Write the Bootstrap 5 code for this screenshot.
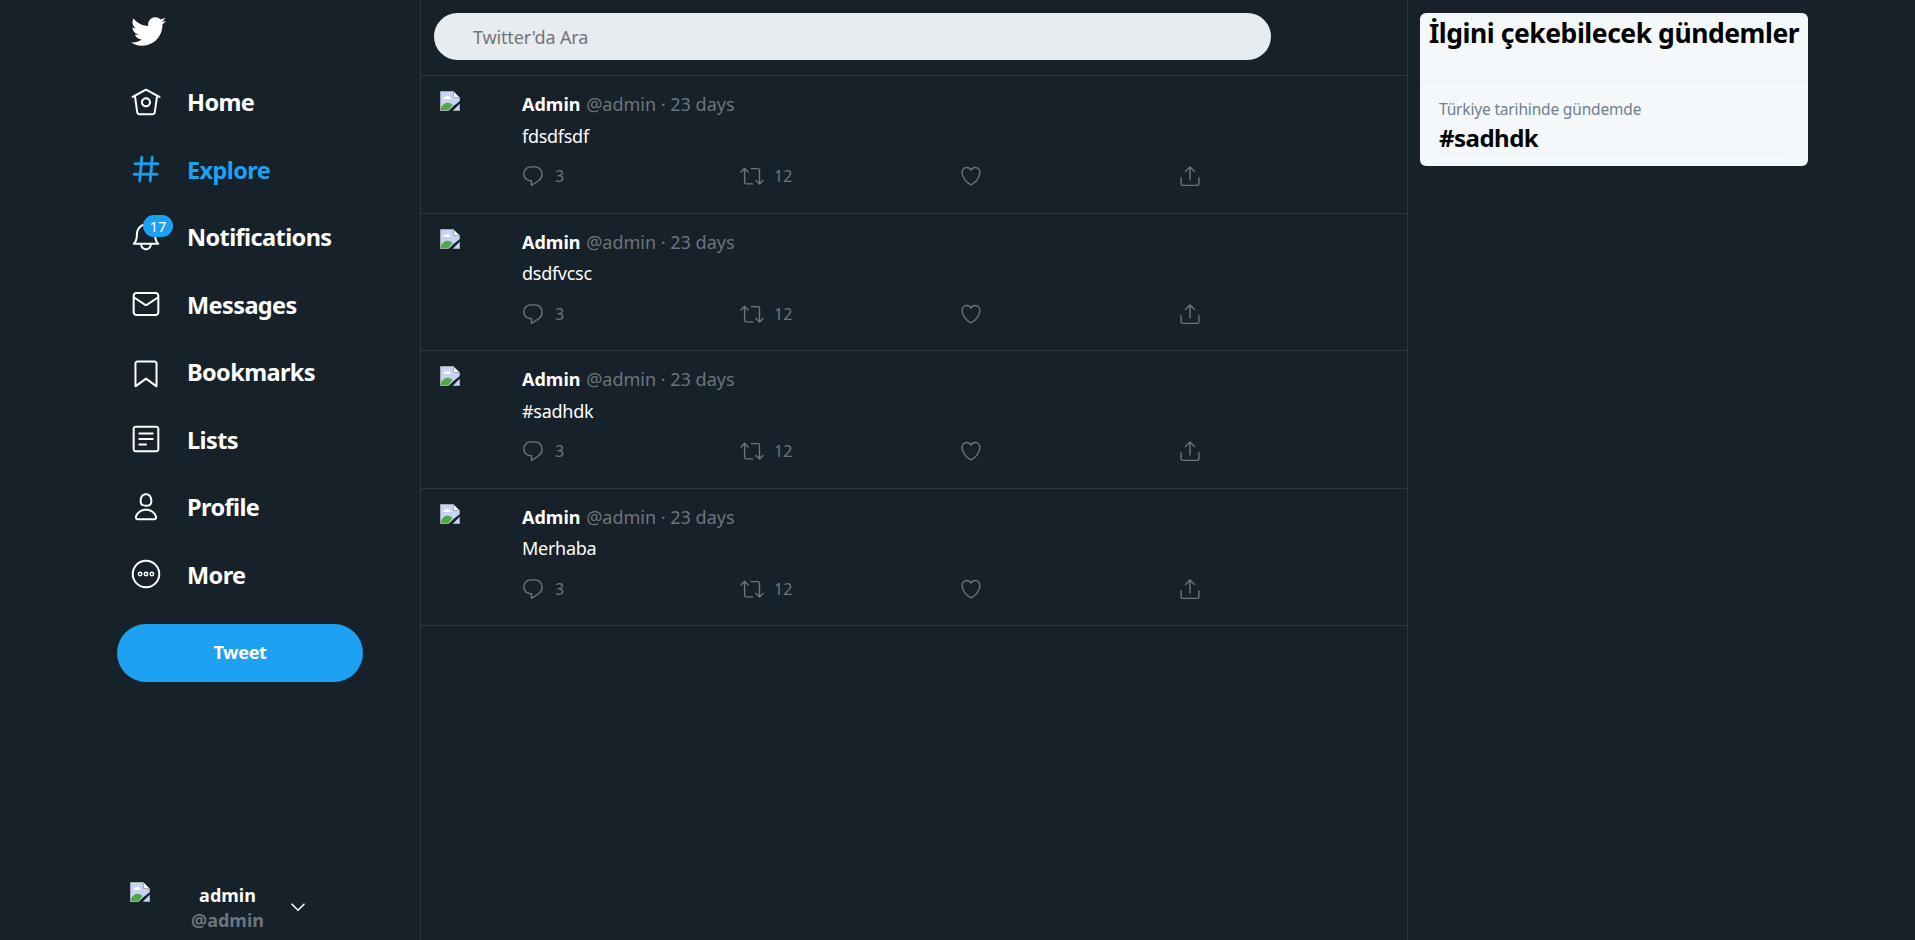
<!DOCTYPE html>
<html lang="tr">
<head>
<meta charset="utf-8">
<meta name="viewport" content="width=device-width, initial-scale=1">
<title>Explore</title>
<link href="https://cdn.jsdelivr.net/npm/bootstrap@5.3.0/dist/css/bootstrap.min.css" rel="stylesheet">
<style>
body{background:#16212a;color:#fff;font-family:"Noto Sans","Open Sans",sans-serif;font-size:18px;overflow:hidden}
.side{width:421px;border-right:1px solid #2b363e;padding-left:117px}
.feed{width:987px;border-right:1px solid #2b363e}
.bird{width:35px;height:35px;margin:14px 0 19px 14px}
.side-link{height:67.5px;padding:2px 0 0 13px;color:#fff;font-size:23.5px;font-weight:700;letter-spacing:-.6px}
.side-link.active{color:#1da1f2}
.side-link.active svg{stroke:#1da1f2;stroke-width:.6}
.side-link svg{width:32px;height:32px;margin:-2px 25px 0 0}
.side-link .count{left:26px;top:12px;width:30px;height:22px;font-size:14.5px;line-height:23px;letter-spacing:0;background:#1da1f2}
.tweet-btn,.tweet-btn:hover{width:246px;height:58px;margin-top:15.5px;background:#1da1f2;color:#fff;font-size:18px;font-weight:700;letter-spacing:-.3px}
.me{padding:0 0 7px 13px;line-height:25px}
.me .broken{margin-top:-1px}
.me .names{width:75px;margin-left:40px;font-weight:700}
.me .chev{width:14px;height:9px;margin:20px 0 0 26px}
.broken{width:20px;height:20px}
.search-bar{height:76px;padding:13px 0 0 13px;border-bottom:1px solid #2b363e}
.search-bar input,.search-bar input:focus{width:837px;height:47px;padding:0 40px 0 39px;border:0;background:#e6ecf0;font-size:18px;letter-spacing:-.15px;box-shadow:none}
.search-bar input::placeholder{color:#757575}
.post{height:137.6px;padding:15px 0 0 19px;border-bottom:1px solid #2b363e}
.post-body{margin-left:62px;line-height:27px}
.dim{color:#6c757d}
.post-name b{margin-right:1px}
.post-text{margin-top:4.5px;letter-spacing:-.28px}
.acts{margin-top:14.5px;height:24px}
.acts>div{width:219px;font-size:16px;line-height:25px}
.acts svg{width:24px;height:24px;margin:0 10px 0 -1px;fill:none;stroke:#6c757d;stroke-width:1.4;stroke-linecap:round;stroke-linejoin:round}
.trends{width:388px;height:153px;margin:13px 0 0 12px;background:#f5f8fa;border-radius:6px;color:#000}
.trends h2{height:69px;margin:0;padding:4px 0 0 9px;font-size:26.5px;line-height:32px;font-weight:700;letter-spacing:-.46px;white-space:nowrap;border-bottom:1px solid #e6ecf0}
.trend{margin:15px 19px 0;border-bottom:1px solid #e6ecf0;height:57px}
.trend small{display:block;font-size:15.5px;line-height:25px;letter-spacing:-.17px;color:#6f808c}
.trend strong{display:block;font-size:24px;line-height:28px;margin-top:2px;letter-spacing:-.5px}
</style>
</head>
<body>
<svg class="d-none">
  <symbol id="broken" viewBox="0 0 20 20"><path fill="#c6d4f3" d="M.5.5h13l6 6v13H.5z"/><path fill="#fff" d="M3.5 7.5c0-2 2-2 2.3-1.4C6.500 4 9.500 4.500 9.500 6.300c1.500 0 1.500 1.700.5 1.700H4z"/><path fill="#51a846" d="M1 19v-2.500c3-5.500 8-6 11.500-2.500L8.500 19z"/><path fill="none" stroke="#a4a7ab" d="M.5 19.500V.5h13l6 6v13z"/><path fill="#fff" stroke="#a4a7ab" d="M13.500.5v6h6z"/><path fill="#16212a" d="M20 10v2.500L12.500 20H8.500l5-5z"/></symbol>
  <symbol id="reply" viewBox="0 0 24 24"><path d="M14.050 2.900H9.900c-4 0-7.100 3.100-7.100 7.100 0 3.900 2.900 6.700 7.100 6.700h.6v4.600c2-1.200 6-3.800 7.700-5.100 1.800-1.500 2.900-3.700 2.900-6 0-4.200-3-7.300-7.050-7.300z"/></symbol>
  <symbol id="retweet" viewBox="0 0 24 24"><path d="M1 8l3.600-3.700L8.200 8M4.600 4.600v13.600c0 1 .6 1.700 1.700 1.700h6.400M11.300 4.600h6.400c1.100 0 1.800.6 1.800 1.700v13.500M15.900 16.400l3.600 3.600 3.600-3.600"/></symbol>
  <symbol id="heart" viewBox="0 0 24 24"><path d="M12 6.200C11.100 4.400 9.600 3.500 7.700 3.500 5 3.500 3.100 5.700 3.100 8.700c0 4.500 4.600 10.400 8.900 12.100 4.300-1.700 8.900-7.600 8.900-12.100 0-3-1.900-5.200-4.600-5.200-1.900 0-3.400.9-4.300 2.700z"/></symbol>
  <symbol id="share" viewBox="0 0 24 24"><path d="M12 15.900V2.900M7.500 7.400L12 2.900l4.500 4.500M3.100 13.800v5.900c0 1 .7 1.700 1.700 1.700h14.400c1 0 1.700-.7 1.700-1.700v-5.900"/></symbol>
</svg>
<div class="d-flex vh-100">
  <aside class="side d-flex flex-column flex-shrink-0">
    <svg class="bird flex-shrink-0" viewBox="0 0 512 512" fill="#fff"><path d="M459.370 151.716c.325 4.548.325 9.097.325 13.645 0 138.720-105.583 298.558-298.558 298.558-59.452 0-114.680-17.219-161.137-47.106 8.447.974 16.568 1.299 25.340 1.299 49.055 0 94.213-16.568 130.274-44.832-46.132-.975-84.792-31.188-98.112-72.772 6.498.974 12.995 1.624 19.818 1.624 9.421 0 18.843-1.300 27.614-3.573-48.081-9.747-84.143-51.980-84.143-102.985v-1.299c13.969 7.797 30.214 12.670 47.431 13.319-28.264-18.843-46.781-51.005-46.781-87.391 0-19.492 5.197-37.360 14.294-52.954 51.655 63.675 129.300 105.258 216.365 109.807-1.624-7.797-2.599-15.918-2.599-24.040 0-57.828 46.782-104.934 104.934-104.934 30.213 0 57.502 12.670 76.670 33.137 23.715-4.548 46.456-13.320 66.599-25.340-7.798 24.366-24.366 44.833-46.132 57.827 21.117-2.273 41.584-8.122 60.426-16.243-14.292 20.791-32.161 39.308-52.628 54.253z"/></svg>
    <nav class="nav flex-column">
      <a href="#" class="side-link d-flex align-items-center text-decoration-none"><svg viewBox="0 0 24 24" fill="currentColor"><path d="M22.46 7.570L12.357 2.115c-.223-.12-.49-.12-.713 0L1.543 7.570c-.364.197-.5.652-.303 1.017.135.25.394.393.66.393.12 0 .243-.03.356-.09l.815-.44L4.700 19.963c.214 1.215 1.308 2.062 2.658 2.062h9.282c1.352 0 2.445-.848 2.663-2.087l1.626-11.490.818.442c.364.193.82.06 1.017-.304.196-.363.06-.818-.304-1.016zm-4.638 12.133c-.107.606-.703.822-1.180.822H7.360c-.48 0-1.075-.216-1.178-.798L4.480 7.690 12 3.628l7.522 4.060-1.700 12.015z"/><path d="M8.220 12.184c0 2.084 1.695 3.780 3.780 3.780s3.780-1.696 3.780-3.780-1.695-3.780-3.780-3.780-3.780 1.696-3.780 3.780zm6.060 0c0 1.258-1.022 2.280-2.280 2.280s-2.280-1.022-2.280-2.280 1.022-2.280 2.280-2.280 2.280 1.022 2.280 2.280z"/></svg>Home</a>
      <a href="#" class="side-link active d-flex align-items-center text-decoration-none"><svg viewBox="0 0 24 24" fill="currentColor"><path d="M21 7.337h-3.930l.372-4.272c.036-.412-.27-.775-.682-.812-.417-.03-.776.27-.812.683l-.383 4.400h-6.320l.37-4.270c.037-.413-.27-.776-.68-.813-.42-.03-.777.27-.813.683l-.382 4.400H3.782c-.414 0-.75.337-.75.75s.336.75.75.75H7.610l-.55 6.327H3c-.414 0-.75.336-.75.75s.336.75.75.75h3.930l-.372 4.272c-.036.412.27.775.682.812l.066.003c.385 0 .712-.295.746-.686l.383-4.400h6.320l-.37 4.270c-.036.413.27.776.682.813l.066.003c.385 0 .712-.295.746-.686l.382-4.400h3.957c.413 0 .75-.337.75-.75s-.337-.75-.75-.75H16.390l.55-6.327H21c.414 0 .75-.336.75-.75s-.336-.75-.75-.75zm-6.115 7.826h-6.320l.55-6.326h6.320l-.55 6.326z"/></svg>Explore</a>
      <a href="#" class="side-link position-relative d-flex align-items-center text-decoration-none"><svg viewBox="0 0 24 24" fill="currentColor"><path d="M21.697 16.468c-.02-.016-2.140-1.640-2.103-6.030.02-2.532-.812-4.782-2.347-6.335C15.872 2.710 14.010 1.940 12.005 1.930h-.013c-2.004.01-3.866.78-5.242 2.174-1.534 1.553-2.368 3.802-2.346 6.334.037 4.330-2.020 5.967-2.102 6.030-.26.193-.366.53-.265.838.102.308.39.515.712.515h4.920c.102 2.310 1.997 4.160 4.330 4.160s4.226-1.850 4.327-4.160h4.922c.322 0 .61-.206.71-.514.103-.307-.003-.645-.263-.838zM12 20.478c-1.505 0-2.730-1.177-2.828-2.658h5.656c-.1 1.480-1.323 2.660-2.828 2.660zM4.380 16.320c.74-1.132 1.548-3.028 1.524-5.896-.018-2.160.644-3.982 1.913-5.267C8.910 4.050 10.397 3.437 12 3.430c1.603.008 3.087.62 4.180 1.728 1.270 1.285 1.933 3.106 1.915 5.267-.024 2.868.785 4.765 1.525 5.896H4.380z"/></svg><span class="count position-absolute rounded-pill text-center fw-normal">17</span>Notifications</a>
      <a href="#" class="side-link d-flex align-items-center text-decoration-none"><svg viewBox="0 0 24 24" fill="currentColor"><path d="M19.250 3.018H4.750C3.233 3.018 2 4.252 2 5.770v12.495c0 1.518 1.233 2.753 2.750 2.753h14.500c1.517 0 2.750-1.235 2.750-2.753V5.770c0-1.518-1.233-2.752-2.750-2.752zm-14.500 1.500h14.500c.69 0 1.250.56 1.250 1.250v.714l-8.050 5.367c-.273.18-.626.182-.9-.002L3.500 6.482v-.714c0-.69.56-1.250 1.250-1.250zm14.500 14.998H4.750c-.69 0-1.250-.56-1.250-1.250V8.240l7.240 4.830c.383.256.822.384 1.260.384.44 0 .877-.128 1.260-.383l7.240-4.830v10.022c0 .69-.56 1.250-1.250 1.250z"/></svg>Messages</a>
      <a href="#" class="side-link d-flex align-items-center text-decoration-none"><svg viewBox="0 0 24 24" fill="currentColor"><path d="M19.900 23.500c-.157 0-.312-.05-.442-.144L12 17.928l-7.458 5.430c-.228.164-.53.19-.782.06-.25-.127-.41-.385-.41-.667V5.600c0-1.240 1.010-2.250 2.250-2.250h12.798c1.240 0 2.250 1.010 2.250 2.250v17.150c0 .282-.158.54-.41.668-.106.055-.223.082-.338.082zM12 16.250c.155 0 .31.048.44.144l6.710 4.883V5.600c0-.412-.337-.75-.75-.75H5.600c-.413 0-.75.338-.75.75v15.677l6.710-4.883c.13-.096.285-.144.44-.144z"/></svg>Bookmarks</a>
      <a href="#" class="side-link d-flex align-items-center text-decoration-none"><svg viewBox="0 0 24 24" fill="currentColor"><path d="M19.750 22H4.250C3.010 22 2 20.990 2 19.750V4.250C2 3.010 3.010 2 4.250 2h15.500C20.990 2 22 3.010 22 4.250v15.500c0 1.240-1.010 2.250-2.250 2.250zM4.250 3.500c-.414 0-.75.337-.75.75v15.500c0 .413.336.75.75.75h15.500c.414 0 .75-.337.75-.75V4.250c0-.413-.336-.75-.75-.75H4.250z"/><path d="M17 8.640H7c-.414 0-.75-.337-.75-.75s.336-.75.75-.75h10c.414 0 .75.335.75.75s-.336.75-.75.75zm0 4.110H7c-.414 0-.75-.336-.75-.75s.336-.75.75-.75h10c.414 0 .75.336.75.75s-.336.75-.75.75zm-5 4.110H7c-.414 0-.75-.335-.75-.75s.336-.75.75-.75h5c.414 0 .75.337.75.75s-.336.75-.75.75z"/></svg>Lists</a>
      <a href="#" class="side-link d-flex align-items-center text-decoration-none"><svg viewBox="0 0 24 24" fill="currentColor"><path d="M12 11.816c1.355 0 2.872-.15 3.840-1.256.814-.93 1.078-2.368.806-4.392-.38-2.825-2.117-4.512-4.646-4.512S7.734 3.343 7.354 6.170c-.272 2.022-.008 3.460.806 4.390.968 1.107 2.485 1.256 3.840 1.256zM8.840 6.368c.162-1.200.787-3.212 3.160-3.212s2.998 2.013 3.160 3.212c.207 1.550.057 2.627-.45 3.205-.455.52-1.266.743-2.710.743s-2.255-.223-2.710-.743c-.507-.578-.657-1.656-.45-3.205zm11.440 12.868c-.877-3.526-4.282-5.990-8.280-5.990s-7.403 2.464-8.280 5.990c-.172.692-.028 1.400.395 1.940.408.52 1.040.82 1.733.82h12.304c.693 0 1.325-.3 1.733-.82.424-.54.567-1.247.394-1.940zm-1.576 1.016c-.126.16-.316.246-.552.246H5.848c-.235 0-.426-.085-.552-.246-.137-.174-.18-.412-.12-.654.71-2.855 3.517-4.850 6.824-4.850s6.114 1.994 6.824 4.850c.06.242.017.48-.12.654z"/></svg>Profile</a>
      <a href="#" class="side-link d-flex align-items-center text-decoration-none"><svg viewBox="0 0 24 24" fill="none" stroke="currentColor"><circle cx="12" cy="12" r="9.950" stroke-width="1.500"/><g stroke-width="1.100"><circle cx="7.600" cy="12" r="1.300"/><circle cx="12" cy="12" r="1.300"/><circle cx="16.400" cy="12" r="1.300"/></g></svg>More</a>
    </nav>
    <button class="tweet-btn btn rounded-pill border-0 flex-shrink-0">Tweet</button>
    <div class="me d-flex mt-auto">
      <svg class="broken"><use href="#broken"/></svg>
      <div class="names d-flex flex-column align-items-center"><span>admin</span><span class="dim">@admin</span></div>
      <svg class="chev" viewBox="0 0 14 9" fill="none" stroke="#fff" stroke-width="1.600" stroke-linecap="round"><path d="M1 1.200l6 6 6-6"/></svg>
    </div>
  </aside>
  <main class="feed flex-shrink-0">
    <div class="search-bar"><input class="form-control rounded-pill" type="text" placeholder="Twitter'da Ara"></div>
    <div id="posts"></div>
  </main>
  <aside class="flex-shrink-0">
    <div class="trends">
      <h2>İlgini çekebilecek gündemler</h2>
      <div class="trend"><small>Türkiye tarihinde gündemde</small><strong>#sadhdk</strong></div>
    </div>
  </aside>
</div>
<script src="https://cdn.jsdelivr.net/npm/bootstrap@5.3.0/dist/js/bootstrap.bundle.min.js"></script>
<script>
document.getElementById('posts').innerHTML = ['fdsdfsdf', 'dsdfvcsc', '#sadhdk', 'Merhaba'].map(text => `
<article class="post d-flex">
  <svg class="broken flex-shrink-0"><use href="#broken"/></svg>
  <div class="post-body">
    <div class="post-name"><b>Admin</b> <span class="dim">@admin · 23 days</span></div>
    <div class="post-text">${text}</div>
    <div class="acts dim d-flex">
      <div class="d-flex"><svg><use href="#reply"/></svg>3</div>
      <div class="d-flex"><svg><use href="#retweet"/></svg>12</div>
      <div class="d-flex"><svg><use href="#heart"/></svg></div>
      <div class="d-flex"><svg><use href="#share"/></svg></div>
    </div>
  </div>
</article>`).join('');
</script>
</body>
</html>
